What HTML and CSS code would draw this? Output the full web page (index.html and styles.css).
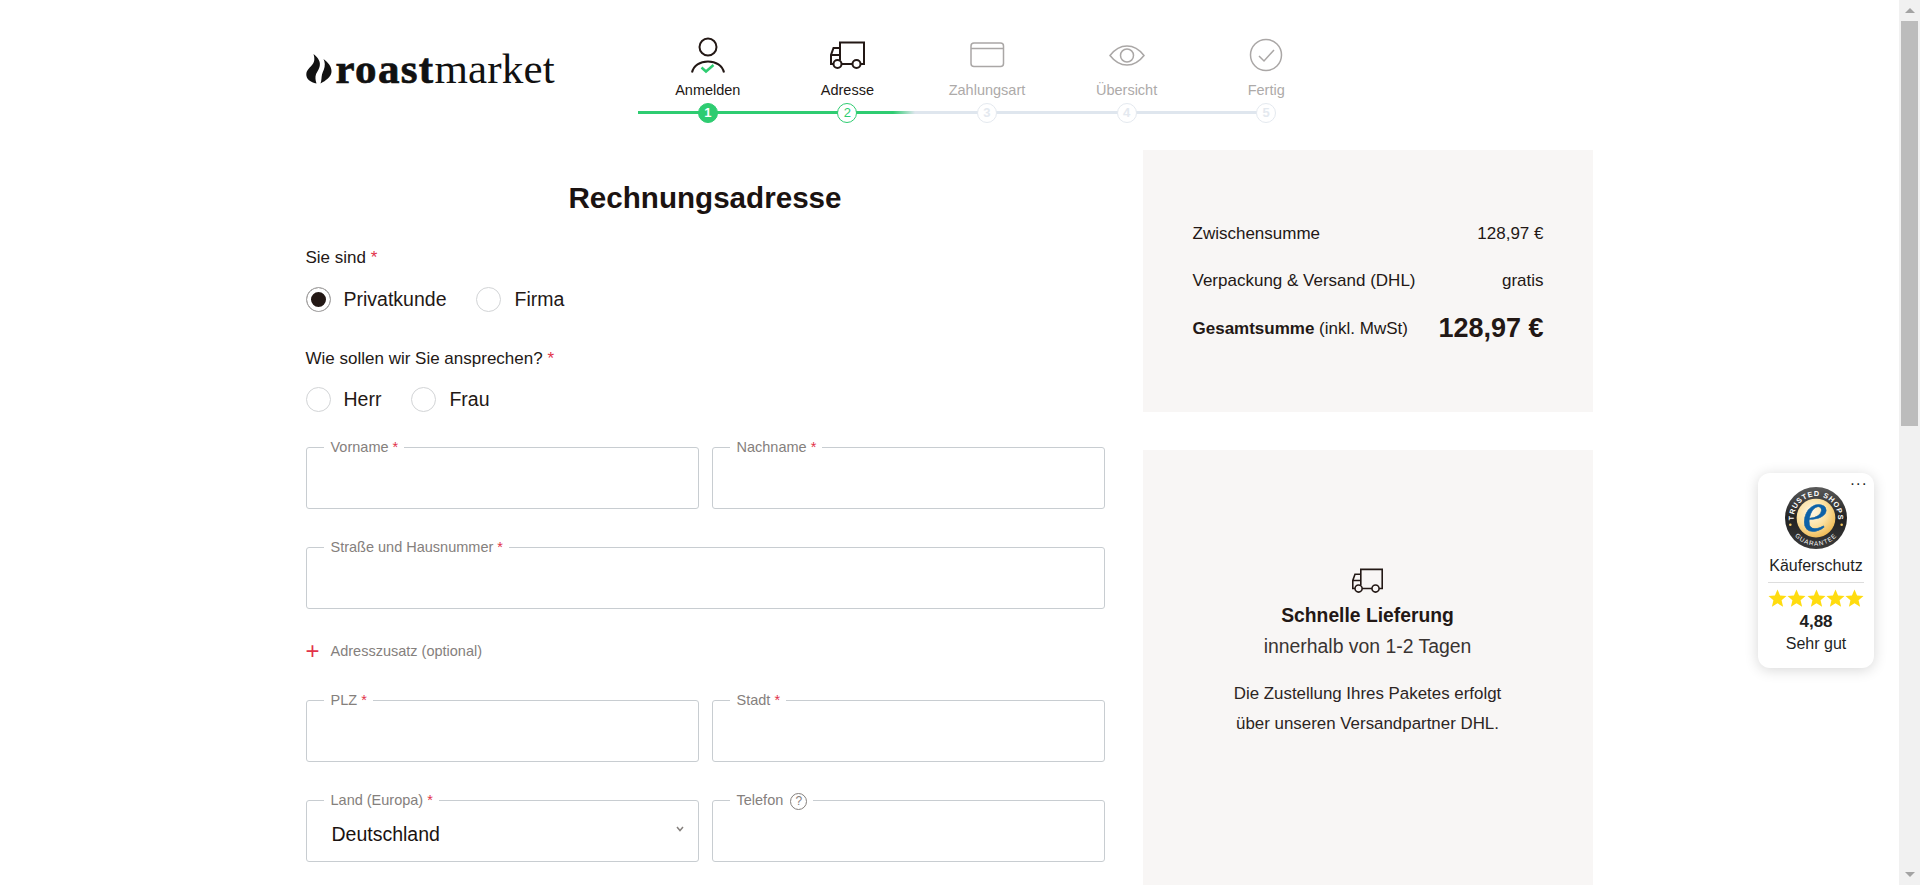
FILE: index.html
```html
<!DOCTYPE html>
<html lang="de">
  <head>
    <meta charset="utf-8">
    <title>Rechnungsadresse - roastmarket</title>
    <link rel="stylesheet" href="styles.css">
  </head>

  <body>
    <svg class="defs" width="0" height="0">
      <symbol id="truck" viewBox="0 0 60 46">
        <path d="M23 18V12.500H47V34H43.500M35.500 34H24.500M16.500 34H14V25L16.500 18H23V30M14 25H23"/>
        <circle cx="20.500" cy="34" r="4"/>
        <circle cx="39.500" cy="34" r="4"/>
      </symbol>
      <symbol id="star" viewBox="0 0 20 20">
        <path d="M10 .5l2.700 6.300 6.800.6-5.200 4.500 1.600 6.700L10 15.100l-5.900 3.500 1.600-6.700L.5 7.400l6.800-.6z"/>
      </symbol>
    </svg>

    <div class="page">
      <div class="wrap">
        <header class="top">
          <a class="logo">
            <svg class="flames" viewBox="0 0 26 30">
              <path d="M7.500 0c5 4 7.500 8 6 13C12.300 17 9.800 19 9.500 22.500c-.2 2.800.3 4.800 1 7C4.500 28.500 0 25 .3 20 .7 14.500 6.500 12.500 8 7.500 8.700 5 8.300 2.500 7.500 0z"/>
              <path d="M17.500 5c4 3 8.500 7.500 8 13-.5 5-5.500 8.500-11 11.500 1.200-3 .8-6 1.500-9 .9-3.500 3-6 2.800-10.500-.1-1.800-.5-3.500-1.300-5z"/>
            </svg>
            <span class="logo-text"><b>roast</b>market</span>
          </a>

          <ol class="steps">
            <li class="step done">
              <svg viewBox="0 0 60 46">
                <circle cx="30" cy="17" r="8.500"/>
                <path d="M14 42.500C15.500 35.500 22 31.500 30 31.500S44.500 35.500 46 42.500"/>
                <path class="tick" d="M23.500 37.500l4.500 4 7.500-6.500"/>
              </svg>
              <span>Anmelden</span>
              <i class="dot">1</i>
            </li>
            <li class="step active">
              <svg viewBox="0 0 60 46"><use href="#truck"/></svg>
              <span>Adresse</span>
              <i class="dot">2</i>
            </li>
            <li class="step">
              <svg viewBox="0 0 60 46">
                <rect x="14" y="13" width="32.500" height="23.500" rx="3"/>
                <path d="M14 18.500H46.500"/>
              </svg>
              <span>Zahlungsart</span>
              <i class="dot">3</i>
            </li>
            <li class="step">
              <svg viewBox="0 0 60 46">
                <path d="M13 25.500C18 19 24 16 30 16S42 19 47 25.500C42 32 36 35 30 35S18 32 13 25.500Z"/>
                <circle cx="30" cy="25.500" r="6.500"/>
              </svg>
              <span>Übersicht</span>
              <i class="dot">4</i>
            </li>
            <li class="step">
              <svg viewBox="0 0 60 46">
                <circle cx="30" cy="25" r="15.500"/>
                <path d="M23 26l5 5 10-11"/>
              </svg>
              <span>Fertig</span>
              <i class="dot">5</i>
            </li>
          </ol>
        </header>

        <div class="columns">
          <form class="form">
            <h1>Rechnungsadresse</h1>

            <p class="question">Sie sind <em>*</em></p>
            <div class="radios">
              <label class="radio checked"><i></i>Privatkunde</label>
              <label class="radio"><i></i>Firma</label>
            </div>

            <p class="question second">Wie sollen wir Sie ansprechen? <em>*</em></p>
            <div class="radios lower">
              <label class="radio"><i></i>Herr</label>
              <label class="radio"><i></i>Frau</label>
            </div>

            <div class="fields">
              <fieldset>
                <legend>Vorname <em>*</em></legend>
                <input type="text">
              </fieldset>
              <fieldset>
                <legend>Nachname <em>*</em></legend>
                <input type="text">
              </fieldset>
              <fieldset class="wide">
                <legend>Straße und Hausnummer <em>*</em></legend>
                <input type="text">
              </fieldset>

              <p class="extra wide"><b>+</b>Adresszusatz (optional)</p>

              <fieldset>
                <legend>PLZ <em>*</em></legend>
                <input type="text">
              </fieldset>
              <fieldset>
                <legend>Stadt <em>*</em></legend>
                <input type="text">
              </fieldset>
              <fieldset class="has-select">
                <legend>Land (Europa) <em>*</em></legend>
                <select>
                  <option>Deutschland</option>
                </select>
                <svg class="chevron" viewBox="0 0 8 6"><path d="M1 1l3 3.500L7 1"/></svg>
              </fieldset>
              <fieldset>
                <legend>Telefon <i class="hint">?</i></legend>
                <input type="text">
              </fieldset>
            </div>
          </form>

          <aside class="side">
            <section class="box summary">
              <div class="row"><span>Zwischensumme</span><span>128,97 €</span></div>
              <div class="row"><span>Verpackung &amp; Versand (DHL)</span><span>gratis</span></div>
              <div class="row"><span><b>Gesamtsumme</b> (inkl. MwSt)</span><strong>128,97 €</strong></div>
            </section>

            <section class="box delivery">
              <svg class="truck" viewBox="12 11 37 28"><use href="#truck" width="60" height="46"/></svg>
              <h2>Schnelle Lieferung</h2>
              <p class="sub">innerhalb von 1-2 Tagen</p>
              <p>Die Zustellung Ihres Paketes erfolgt<br>über unseren Versandpartner DHL.</p>
            </section>
          </aside>
        </div>
      </div>

      <div class="badge">
        <span class="more">...</span>
        <svg class="seal" viewBox="0 0 64 64">
          <defs>
            <radialGradient id="gold" cx="40%" cy="35%" r="70%">
              <stop offset="0" stop-color="#fff8e6"/>
              <stop offset=".55" stop-color="#fbe0a0"/>
              <stop offset="1" stop-color="#eeb84f"/>
            </radialGradient>
            <linearGradient id="ring" x1="0" y1="0" x2="0" y2="1">
              <stop offset="0" stop-color="#5a5a5a"/>
              <stop offset=".5" stop-color="#222"/>
              <stop offset="1" stop-color="#3a3a3a"/>
            </linearGradient>
            <path id="arc-top" d="M9.500 36a22.800 22.800 0 1 1 45 0"/>
            <path id="arc-bottom" d="M3.500 32a28.500 28.500 0 0 0 57 0"/>
          </defs>
          <circle cx="32" cy="32" r="32" fill="url(#ring)"/>
          <circle cx="32" cy="32" r="20" fill="url(#gold)"/>
          <text class="seal-top"><textPath href="#arc-top" startOffset="50%" text-anchor="middle">TRUSTED SHOPS</textPath></text>
          <text class="seal-bottom"><textPath href="#arc-bottom" startOffset="50%" text-anchor="middle">GUARANTEE</textPath></text>
          <circle cx="5.500" cy="39" r="1.300" fill="#f5c860"/>
          <circle cx="58.500" cy="39" r="1.300" fill="#f5c860"/>
          <text class="seal-e" x="31" y="45" text-anchor="middle">e</text>
        </svg>
        <div class="badge-title">Käuferschutz</div>
        <div class="stars">
          <svg viewBox="0 0 20 20"><use href="#star"/></svg>
          <svg viewBox="0 0 20 20"><use href="#star"/></svg>
          <svg viewBox="0 0 20 20"><use href="#star"/></svg>
          <svg viewBox="0 0 20 20"><use href="#star"/></svg>
          <svg viewBox="0 0 20 20"><use href="#star"/></svg>
        </div>
        <div class="score">4,88</div>
        <div class="grade">Sehr gut</div>
      </div>
    </div>

    <div class="scrollbar">
      <i class="arrow up"></i>
      <div class="track"><div class="thumb"></div></div>
      <i class="arrow down"></i>
    </div>
  </body>
</html>
```

FILE: styles.css
```css
* {
  box-sizing: border-box;
}

html, body {
  height: 100%;
}

body {
  margin: 0;
  display: flex;
  overflow: hidden;
  background-color: #fff;
  color: #231815;
  font-family: "Liberation Sans", Arial, sans-serif;
  font-size: 17px;
}

em {
  font-style: normal;
  color: #e2334a;
}

.defs {
  position: absolute;
}

.page {
  position: relative;
  flex: 1;
  min-width: 0;
  overflow: hidden;
}

.wrap {
  width: 1288px;
  margin: 0 auto;
}

/* header + checkout steps */
.top {
  display: flex;
  height: 150px;
}

.logo {
  flex: none;
  width: 332px;
  height: 90px;
  padding-top: 51px;
  display: flex;
  align-items: flex-start;
  color: #111;
}

.flames {
  flex: none;
  width: 26px;
  height: 30px;
  margin-top: 3px;
  fill: #111;
}

.logo-text {
  margin-left: 4px;
  font-family: "Liberation Serif", serif;
  font-size: 43px;
  line-height: 36px;
  letter-spacing: .2px;
}

.logo-text b {
  letter-spacing: 1.300px;
  -webkit-text-stroke: .7px #111;
}

.steps {
  list-style: none;
  display: flex;
  margin: 0;
  padding: 30px 0 0 .5px;
  position: relative;
  height: 125px;
  width: 698.500px;
}

.steps::before {
  content: "";
  position: absolute;
  left: 0;
  width: 628px;
  top: 111px;
  height: 3px;
  background: linear-gradient(to right, #2ecc71 255px, #dfe6ee 277px);
}

.step {
  flex: 1;
  display: flex;
  flex-direction: column;
  align-items: center;
  color: #adaaa9;
  font-size: 14.500px;
  position: relative;
}

.step svg {
  width: 60px;
  height: 46px;
  fill: none;
  stroke: #aaa7a6;
  stroke-width: 1.500;
}

.step span {
  line-height: 18px;
  margin-top: 5px;
}

.step.done,
.step.active {
  color: #231815;
}

.step.done svg,
.step.active svg {
  stroke: #231815;
  stroke-width: 2;
}

.step .tick {
  stroke: #2ecc71;
  stroke-width: 2.500;
}

.dot {
  width: 20px;
  height: 20px;
  margin-top: 4px;
  border: 1.500px solid #e4e9ef;
  border-radius: 50%;
  background-color: #fff;
  color: #e4e9ef;
  font-style: normal;
  font-weight: bold;
  font-size: 13px;
  line-height: 17px;
  text-align: center;
  position: relative;
}

.active .dot {
  border-color: #2ecc71;
  color: #2ecc71;
  font-weight: normal;
}

.done .dot {
  border-color: #2ecc71;
  background-color: #2ecc71;
  color: #fff;
}

.columns {
  display: grid;
  grid-template-columns: 799px 450px;
  column-gap: 38px;
}

/* billing form */
h1 {
  margin: 33px 0 0;
  font-size: 29.600px;
  line-height: 30px;
  text-align: center;
  color: #1b1311;
}

.question {
  margin: 35px 0 0;
  line-height: 20px;
}

.question.second {
  margin-top: 37px;
}

.radios {
  display: flex;
  gap: 30px;
  margin-top: 19px;
}

.radios.lower {
  margin-top: 18px;
}

.radio {
  display: flex;
  align-items: center;
  gap: 13px;
  height: 25px;
  font-size: 19.500px;
}

.radio i {
  width: 25px;
  height: 25px;
  border: 1px solid #d2d4d6;
  border-radius: 50%;
  background-color: #fff;
}

.radio.checked i {
  border-color: #b4b4b4;
  background-color: #231815;
  box-shadow: inset 0 0 0 4px #fff;
}

.fields {
  display: grid;
  grid-template-columns: 393px 393px;
  column-gap: 13px;
  row-gap: 30px;
  margin-top: 27px;
}

.wide {
  grid-column: 1 / 3;
}

fieldset {
  position: relative;
  margin: 0;
  padding: 0;
  min-width: 0;
  height: 70px;
  border: 1px solid #c8cdd1;
  border-radius: 3px;
}

legend {
  margin-left: 17px;
  padding: 0 6px 0 7px;
  height: 16px;
  line-height: 17px;
  font-size: 14.500px;
  color: #85807d;
}

fieldset input,
fieldset select {
  display: block;
  width: 100%;
  height: 51px;
  padding: 0 25px;
  border: 0;
  outline: 0;
  background: transparent;
  color: #1b1311;
  font: 19.500px "Liberation Sans", Arial, sans-serif;
  appearance: none;
}

.chevron {
  position: absolute;
  right: 14px;
  top: 18px;
  width: 8px;
  height: 6px;
  fill: none;
  stroke: #85807d;
  stroke-width: 1.500;
}

.hint {
  display: inline-block;
  width: 17px;
  height: 17px;
  margin-left: 3px;
  border: 1px solid #85807d;
  border-radius: 50%;
  font-style: normal;
  font-size: 12px;
  line-height: 15px;
  text-align: center;
}

.extra {
  display: flex;
  align-items: center;
  height: 20px;
  margin: 2px 0 1px;
  font-size: 14.500px;
  color: #85807d;
}

.extra b {
  width: 25px;
  color: #e2334a;
  font-size: 24px;
  font-weight: normal;
  line-height: 20px;
}

/* right column */
.side {
  display: flex;
  flex-direction: column;
  gap: 38px;
}

.box {
  background-color: #f8f6f5;
}

.summary {
  height: 262px;
  padding: 60px 49px 0 50px;
}

.row {
  display: flex;
  justify-content: space-between;
  align-items: center;
  height: 47.500px;
}

.row strong {
  font-size: 27px;
}

.delivery {
  height: 480px;
  padding-top: 118px;
  text-align: center;
  color: #2c2523;
}

.truck {
  display: block;
  width: 33px;
  height: 25px;
  margin: 0 auto;
  fill: none;
  stroke: #231815;
  stroke-width: 1.800;
}

.delivery h2 {
  margin: 8px 0 0;
  font-size: 19.300px;
  line-height: 30px;
  color: #231815;
}

.delivery p {
  margin: 18px 0 0;
  line-height: 30px;
  font-size: 16.900px;
}

.delivery .sub {
  margin: 0;
  font-size: 19.400px;
  color: #3a3432;
}

/* trusted shops badge, floats over the page */
.badge {
  position: absolute;
  left: 1758px;
  top: 473px;
  width: 116px;
  height: 195px;
  padding-top: 14px;
  display: flex;
  flex-direction: column;
  align-items: center;
  border-radius: 12px;
  background-color: #fff;
  box-shadow: 0 2px 14px rgba(0, 0, 0, .16);
  color: #1f1f1f;
}

.more {
  position: absolute;
  right: 6px;
  top: 2px;
  font-size: 16px;
  line-height: 10px;
  letter-spacing: 1.500px;
}

.seal {
  width: 62px;
  height: 62px;
  flex: none;
}

.seal-top {
  fill: #fff;
  font: bold 7.500px "Liberation Sans", sans-serif;
  letter-spacing: .9px;
}

.seal-bottom {
  fill: #fff;
  font: 6.500px "Liberation Sans", sans-serif;
  letter-spacing: 1px;
}

.seal-e {
  fill: #0d62a8;
  stroke: #0d62a8;
  stroke-width: .5px;
  font: italic 58px "Liberation Serif", serif;
}

.badge-title {
  width: 96px;
  margin-top: 7px;
  padding-bottom: 6px;
  border-bottom: 1px solid #ddd;
  font-size: 16px;
  line-height: 20px;
  text-align: center;
  white-space: nowrap;
}

.stars {
  display: flex;
  justify-content: space-between;
  width: 96px;
  margin-top: 6px;
}

.stars svg {
  width: 19px;
  height: 19px;
  fill: #ffdc0f;
}

.score {
  margin-top: 4px;
  font-size: 17px;
  font-weight: bold;
  line-height: 20px;
}

.grade {
  margin-top: 2px;
  font-size: 16px;
  line-height: 20px;
}

/* drawn scrollbar */
.scrollbar {
  flex: none;
  width: 21px;
  display: flex;
  flex-direction: column;
  background-color: #f1f1f1;
}

.arrow {
  flex: none;
  height: 21px;
  display: flex;
  align-items: center;
  justify-content: center;
}

.arrow::before {
  content: "";
  border: 5px solid transparent;
}

.arrow.up::before {
  border-top-width: 0;
  border-bottom-color: #a3a3a3;
}

.arrow.down::before {
  border-bottom-width: 0;
  border-top-color: #a3a3a3;
}

.track {
  flex: 1;
  padding: 0 2px;
}

.thumb {
  height: 405px;
  background-color: #bcbcbc;
}
```
